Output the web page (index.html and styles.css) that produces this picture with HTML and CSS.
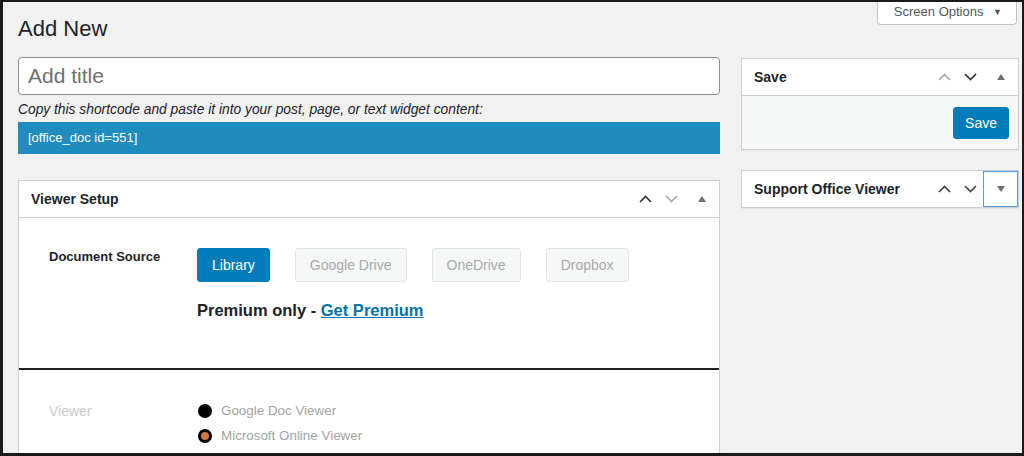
FILE: index.html
```html
<!DOCTYPE html>
<html lang="en">
<head>
    <meta charset="UTF-8">
    <meta name="viewport" content="width=device-width, initial-scale=1.0">
    <title>Add New Document</title>
    <link rel="stylesheet" href="styles.css">
</head>
<body>

<div class="frame">
    <!-- Main column -->
    <div class="main">
        <h1 class="page-title">Add New</h1>
        <input class="title-input" type="text" placeholder="Add title">
        <p class="shortcode-hint">Copy this shortcode and paste it into your post, page, or text widget content:</p>
        <div class="shortcode">[office_doc id=551]</div>

        <div class="postbox">
            <div class="postbox-header">
                <h2>Viewer Setup</h2>
                <div class="handle-actions">
                    <span class="handle-btn dark">
                        <svg width="13" height="8" viewBox="0 0 13 8"><polyline points="1,7 6.5,1.5 12,7"/></svg>
                    </span>
                    <span class="handle-btn light">
                        <svg width="13" height="8" viewBox="0 0 13 8"><polyline points="1,1 6.5,6.5 12,1"/></svg>
                    </span>
                    <span class="handlediv">
                        <svg width="8" height="6" viewBox="0 0 8 6"><polygon points="0,6 4,0 8,6"/></svg>
                    </span>
                </div>
            </div>

            <div class="setup-section source-section">
                <div class="field-row">
                    <div class="field-label">Document Source</div>
                    <div class="field-body">
                        <div class="source-buttons">
                            <span class="btn btn-primary">Library</span>
                            <span class="btn btn-disabled">Google Drive</span>
                            <span class="btn btn-disabled">OneDrive</span>
                            <span class="btn btn-disabled">Dropbox</span>
                        </div>
                        <p class="premium-note">Premium only - <a href="#">Get Premium</a></p>
                    </div>
                </div>
            </div>

            <div class="setup-section viewer-section">
                <div class="field-row">
                    <div class="field-label muted">Viewer</div>
                    <div class="field-body">
                        <label class="radio-row"><span class="radio"></span>Google Doc Viewer</label>
                        <label class="radio-row"><span class="radio checked"></span>Microsoft Online Viewer</label>
                    </div>
                </div>
            </div>
        </div>
    </div>

    <!-- Sidebar -->
    <div class="sidebar">
        <div class="screen-options">
            <span class="screen-tab">Screen Options <span class="tab-arrow">&#9660;</span></span>
        </div>

        <div class="postbox side-box">
            <div class="postbox-header">
                <h2>Save</h2>
                <div class="handle-actions">
                    <span class="handle-btn light">
                        <svg width="13" height="8" viewBox="0 0 13 8"><polyline points="1,7 6.5,1.5 12,7"/></svg>
                    </span>
                    <span class="handle-btn dark">
                        <svg width="13" height="8" viewBox="0 0 13 8"><polyline points="1,1 6.5,6.5 12,1"/></svg>
                    </span>
                    <span class="handlediv">
                        <svg width="8" height="6" viewBox="0 0 8 6"><polygon points="0,6 4,0 8,6"/></svg>
                    </span>
                </div>
            </div>
            <div class="save-actions">
                <span class="btn btn-primary">Save</span>
            </div>
        </div>

        <div class="postbox side-box support-box">
            <div class="postbox-header no-border">
                <h2>Support Office Viewer</h2>
                <div class="handle-actions">
                    <span class="handle-btn mid">
                        <svg width="13" height="8" viewBox="0 0 13 8"><polyline points="1,7 6.5,1.5 12,7"/></svg>
                    </span>
                    <span class="handle-btn mid">
                        <svg width="13" height="8" viewBox="0 0 13 8"><polyline points="1,1 6.5,6.5 12,1"/></svg>
                    </span>
                    <span class="handlediv focused">
                        <svg width="8" height="6" viewBox="0 0 8 6"><polygon points="0,0 8,0 4,6"/></svg>
                    </span>
                </div>
            </div>
        </div>
    </div>
</div>

</body>
</html>
```

FILE: styles.css
```css
/* Page basics */
body {
    margin: 0;
    font-family: "Liberation Sans", Arial, sans-serif;
    color: #1d2327;
}

/* Outer frame with the dark screenshot edge */
.frame {
    display: flex;
    gap: 21px;
    height: 456px;
    box-sizing: border-box;
    overflow: hidden;
    background-color: #f1f1f1;
    border-style: solid;
    border-color: #1a1a1a;
    border-width: 2px 2px 3px 3px;
    padding: 0 3px 0 15px;
}

.main {
    width: 702px;
    flex-shrink: 0;
}

.sidebar {
    width: 278px;
    flex-shrink: 0;
}

/* Title area */
.page-title {
    margin: 12px 0 0;
    font-size: 22px;
    font-weight: 400;
    line-height: 29px;
}

.title-input {
    display: block;
    width: 100%;
    height: 38px;
    margin-top: 14px;
    box-sizing: border-box;
    padding: 0 9px;
    border: 1px solid #8c8f94;
    border-radius: 4px;
    background: white;
    font-family: inherit;
    font-size: 21px;
}

.title-input::placeholder {
    color: #707070;
}

.shortcode-hint {
    margin: 5px 0 2px;
    font-size: 13.8px;
    font-style: italic;
    line-height: 20px;
}

.shortcode {
    height: 32px;
    line-height: 32px;
    padding: 0 10px;
    background-color: #1e8cbe;
    color: white;
    font-size: 13px;
}

/* Meta boxes */
.postbox {
    margin-top: 26px;
    background: white;
    border: 1px solid #ccd0d4;
    box-shadow: 0 1px 1px rgba(0, 0, 0, 0.04);
}

.postbox-header {
    display: flex;
    align-items: center;
    justify-content: space-between;
    height: 36px;
    border-bottom: 1px solid #ccd0d4;
}

.postbox-header.no-border {
    border-bottom: none;
}

.postbox-header h2 {
    margin: 0;
    padding-left: 12px;
    font-size: 14px;
    font-weight: bold;
}

.handle-actions {
    display: flex;
    height: 100%;
}

.handle-btn,
.handlediv {
    display: flex;
    align-items: center;
    justify-content: center;
    height: 100%;
    box-sizing: border-box;
}

.handle-btn {
    width: 26px;
}

.handlediv {
    width: 35px;
}

.handle-btn svg polyline {
    fill: none;
    stroke-width: 1.6;
}

.handle-btn.dark svg polyline { stroke: #2c3338; }
.handle-btn.light svg polyline { stroke: #a7aaad; }
.handle-btn.mid svg polyline { stroke: #3c434a; }

.handlediv svg polygon {
    fill: #6c7075;
}

.handlediv.focused {
    border: 1px solid #5b9dd9;
}

/* Viewer setup sections */
.setup-section {
    padding-left: 30px;
}

.source-section {
    height: 152px;
    box-sizing: border-box;
    padding-top: 30px;
    border-bottom: 2px solid #222;
}

.viewer-section {
    padding-top: 28px;
    padding-bottom: 40px;
}

.field-row {
    display: flex;
}

.field-label {
    width: 148px;
    flex-shrink: 0;
    font-size: 13px;
    font-weight: bold;
    line-height: 18px;
}

.field-label.muted {
    font-weight: normal;
    font-size: 14px;
    color: #cbc8c6;
    line-height: 26px;
}

.source-buttons {
    display: flex;
    gap: 25px;
}

.btn {
    display: inline-block;
    height: 34px;
    line-height: 32px;
    box-sizing: border-box;
    padding: 0 14px;
    border: 1px solid transparent;
    border-radius: 3px;
    font-size: 14px;
}

.btn-primary {
    background-color: #007cba;
    border-color: #007cba;
    color: white;
}

.btn-disabled {
    background-color: #f6f7f7;
    border-color: #e2e4e7;
    color: #a7aaad;
}

.premium-note {
    margin: 17px 0 0;
    font-size: 16.5px;
    font-weight: bold;
    line-height: 22px;
}

.premium-note a {
    color: #0073aa;
}

/* Radio list */
.radio-row {
    display: flex;
    align-items: center;
    gap: 9px;
    font-size: 13.4px;
    line-height: 25px;
    color: #a3a3a3;
}

.radio {
    width: 14px;
    height: 14px;
    margin-left: 1px;
    border-radius: 50%;
    background: black;
    box-sizing: border-box;
}

.radio.checked {
    border: 3px solid black;
    background: #d0763b;
}

/* Sidebar */
.screen-options {
    display: flex;
    justify-content: flex-end;
    margin-right: 2px;
}

.screen-tab {
    height: 22px;
    line-height: 20px;
    padding: 0 14px 0 16px;
    background: white;
    border: 1px solid #c3c4c7;
    border-top: none;
    border-radius: 0 0 4px 4px;
    font-size: 13px;
    color: #50575e;
}

.tab-arrow {
    margin-left: 6px;
    font-size: 9px;
    vertical-align: 1px;
}

.side-box {
    margin-top: 33px;
}

.save-actions {
    display: flex;
    justify-content: flex-end;
    padding: 11px 9px 10px;
    background-color: #f6f7f7;
}

.save-actions .btn {
    height: 32px;
    line-height: 30px;
    padding: 0 11px;
}

.support-box {
    margin-top: 20px;
}
```
